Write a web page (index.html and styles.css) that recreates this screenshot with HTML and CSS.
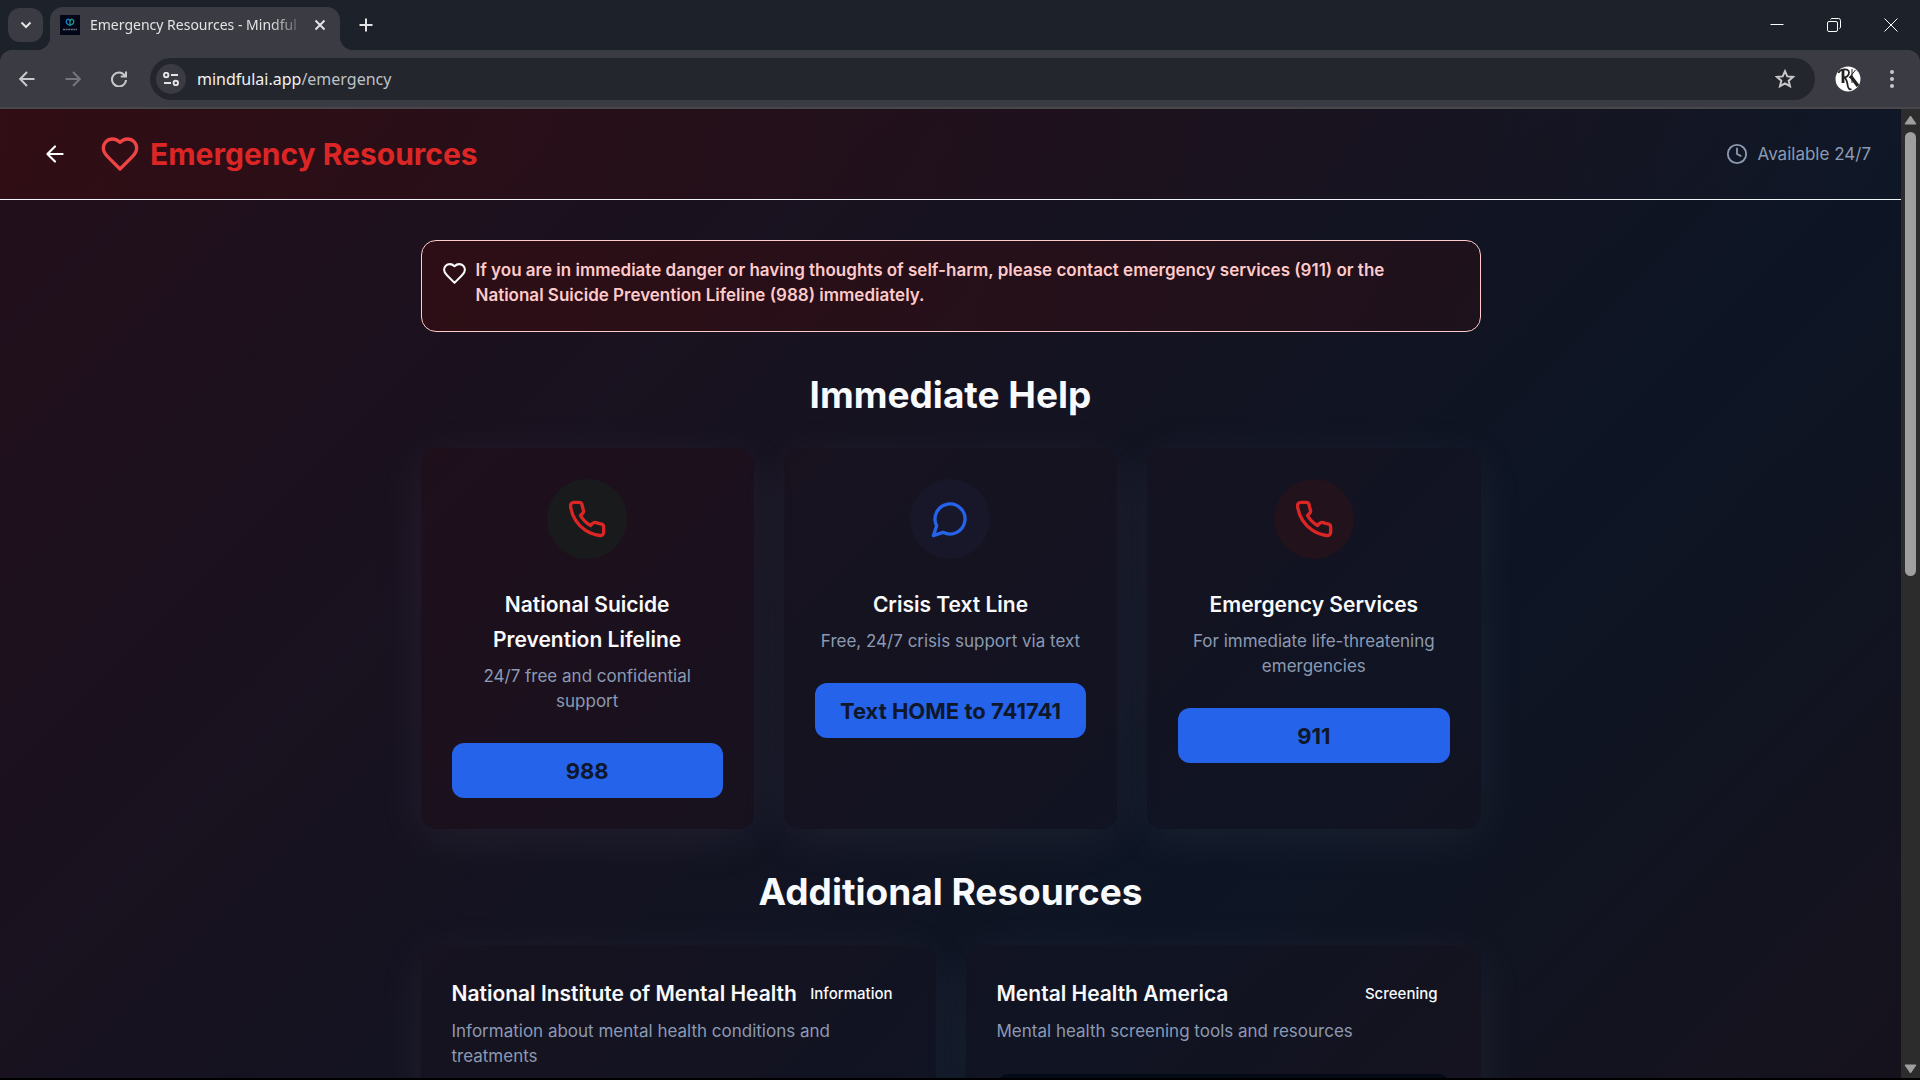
FILE: index.html
```html
<!DOCTYPE html>
<html lang="en">
<head>
<meta charset="utf-8">
<meta name="viewport" content="width=device-width, initial-scale=1">
<title>Emergency Resources - MindfulAI</title>
<link rel="stylesheet" href="styles.css">
</head>
<body>
<svg class="defs" aria-hidden="true">
  <symbol id="i-heart" viewBox="0 0 24 24"><path d="M19 14c1.49-1.46 3-3.21 3-5.5A5.5 5.5 0 0 0 16.5 3c-1.76 0-3 .5-4.500 2-1.500-1.500-2.740-2-4.500-2A5.500 5.500 0 0 0 2 8.500c0 2.300 1.500 4.050 3 5.500l7 7Z"/></symbol>
  <symbol id="i-phone" viewBox="0 0 24 24"><path d="M22 16.920v3a2 2 0 0 1-2.180 2 19.790 19.790 0 0 1-8.630-3.070 19.500 19.500 0 0 1-6-6 19.790 19.790 0 0 1-3.070-8.670A2 2 0 0 1 4.110 2h3a2 2 0 0 1 2 1.720 12.840 12.840 0 0 0 .7 2.810 2 2 0 0 1-.45 2.110L8.090 9.910a16 16 0 0 0 6 6l1.270-1.270a2 2 0 0 1 2.110-.45 12.840 12.840 0 0 0 2.810.7A2 2 0 0 1 22 16.920z"/></symbol>
  <symbol id="i-chat" viewBox="0 0 24 24"><path d="M7.900 20A9 9 0 1 0 4 16.100L2 22Z"/></symbol>
  <symbol id="i-clock" viewBox="0 0 24 24"><circle cx="12" cy="12" r="10"/><path d="M12 6v6l4 2"/></symbol>
  <symbol id="i-arrow" viewBox="0 0 24 24"><path d="m12 19-7-7 7-7M19 12H5"/></symbol>
</svg>

<div class="tabstrip">
  <button class="tab-search" aria-label="Search tabs"><svg width="12" height="12" viewBox="0 0 12 12"><path d="M1.500 3.500 6 8l4.500-4.500"/></svg></button>
  <div class="tab">
    <svg class="favicon" width="20" height="20" viewBox="0 0 20 20"><rect class="favicon-bg" width="20" height="20"/><path d="M10 10.500C7 9.500 5.500 7.500 6.500 5.500S9.500 4 10 6" fill="none" stroke="#1786c4" stroke-width="1.300"/><path d="M10 10.500c3-1 4.500-3 3.500-5S10.500 4 10 6v4" fill="none" stroke="#159a8c" stroke-width="1.300"/><path d="M3 14.500h14" stroke="#6b7280" stroke-width="1.500" stroke-dasharray="2 .6"/></svg>
    <span class="tab-title">Emergency Resources - Mindful</span>
    <button class="plain" aria-label="Close tab"><svg width="12" height="12" viewBox="0 0 12 12"><path d="m1.500 1.500 9 9m0-9-9 9"/></svg></button>
  </div>
  <button class="plain new-tab" aria-label="New tab"><svg width="14" height="14" viewBox="0 0 14 14"><path d="M7 .5v13M.5 7h13"/></svg></button>
  <div class="window-buttons">
    <button class="plain" aria-label="Minimize"><svg width="14" height="14" viewBox="0 0 14 14"><path d="M.5 6.500h13"/></svg></button>
    <button class="plain" aria-label="Restore"><svg width="14" height="14" viewBox="0 0 14 14"><rect x=".5" y="3.500" width="10" height="10" rx="1.500"/><path d="M3.500 1.500q.5-1 1.500-1h6.500a2 2 0 0 1 2 2V9q0 1-1 1.500"/></svg></button>
    <button class="plain" aria-label="Close"><svg width="14" height="14" viewBox="0 0 14 14"><path d="m.5.5 13 13m0-13-13 13"/></svg></button>
  </div>
</div>

<div class="toolbar-wrap">
<div class="toolbar">
  <button class="plain nav" aria-label="Back"><svg width="16" height="16" viewBox="0 0 16 16"><path d="M15.500 8H1.500M8 1 1.200 8 8 15"/></svg></button>
  <button class="plain nav off" aria-label="Forward" disabled><svg width="16" height="16" viewBox="0 0 16 16"><path d="M.5 8h14M8 1l6.800 7L8 15"/></svg></button>
  <button class="plain nav" aria-label="Reload"><svg width="16" height="16" viewBox="0 0 16 16"><path d="M13.800 4.500A7 7 0 1 0 15 9M15 .5V5.500H9.800"/></svg></button>
  <div class="omnibox">
    <button class="site-info" aria-label="Site information"><svg width="16" height="14" viewBox="0 0 16 14"><circle cx="3.200" cy="3" r="2.200"/><path d="M8 3h7M1 11h7"/><circle cx="12.800" cy="11" r="2.200"/></svg></button>
    <div class="url">mindfulai.app<span>/emergency</span></div>
    <button class="plain star" aria-label="Bookmark this page"><svg width="20" height="20" viewBox="0 0 20 20"><path d="m10 2.200 2.300 5.200 5.700.5-4.300 3.800 1.300 5.500L10 14.300l-5 2.900 1.300-5.500L2 7.900l5.700-.5Z"/></svg></button>
  </div>
  <svg class="avatar" width="26" height="26" viewBox="0 0 26 26"><circle cx="13" cy="13" r="12.500" fill="#fff"/><g fill="none" stroke="#222"><path d="M8 3v14" stroke-width="2.800"/><path d="M3.500 7C5 3 14 1.500 14 6.500 14 10 11 11.500 9 11.500c2 1 3 3 3.500 7s2 5.500 4 4.500" stroke-width="1.800"/><path d="M17 3v14" stroke-width="1"/><path d="M20.500 4 14 12" stroke-width="1"/><path d="m15.500 10 7.500 10" stroke-width="3.400"/></g></svg>
  <button class="plain menu" aria-label="Menu"><svg width="4" height="18" viewBox="0 0 4 18"><circle cx="2" cy="2" r="2"/><circle cx="2" cy="9" r="2"/><circle cx="2" cy="16" r="2"/></svg></button>
</div>
</div>

<div class="viewport">
  <div class="page">
    <header class="page-header">
      <a class="back" href="#back" aria-label="Back"><svg class="icon" width="26" height="26"><use href="#i-arrow"/></svg></a>
      <svg class="icon heart" width="40" height="40"><use href="#i-heart"/></svg>
      <h1>Emergency Resources</h1>
      <p class="hours"><svg class="icon" width="22" height="22"><use href="#i-clock"/></svg>Available 24/7</p>
    </header>

    <main class="content">
      <div class="alert" role="alert">
        <svg class="icon" width="25" height="25"><use href="#i-heart"/></svg>
        <p>If you are in immediate danger or having thoughts of self-harm, please contact emergency services (911) or the National Suicide Prevention Lifeline (988) immediately.</p>
      </div>

      <section>
        <h2>Immediate Help</h2>
        <div class="grid three">
          <article class="card help tint-red">
            <div class="disc green"><svg class="icon" width="40" height="40"><use href="#i-phone"/></svg></div>
            <h3>National Suicide Prevention Lifeline</h3>
            <p>24/7 free and confidential support</p>
            <button class="call">988</button>
          </article>
          <article class="card help">
            <div class="disc blue"><svg class="icon" width="40" height="40"><use href="#i-chat"/></svg></div>
            <h3>Crisis Text Line</h3>
            <p>Free, 24/7 crisis support via text</p>
            <button class="call">Text HOME to 741741</button>
          </article>
          <article class="card help">
            <div class="disc red"><svg class="icon" width="40" height="40"><use href="#i-phone"/></svg></div>
            <h3>Emergency Services</h3>
            <p>For immediate life-threatening emergencies</p>
            <button class="call">911</button>
          </article>
        </div>
      </section>

      <section>
        <h2>Additional Resources</h2>
        <div class="grid two">
          <article class="card resource">
            <div class="card-head"><h3>National Institute of Mental Health</h3><span class="badge">Information</span></div>
            <p>Information about mental health conditions and treatments</p>
            <a class="visit" href="#nimh" aria-label="Visit website"></a>
          </article>
          <article class="card resource">
            <div class="card-head"><h3>Mental Health America</h3><span class="badge">Screening</span></div>
            <p>Mental health screening tools and resources</p>
            <a class="visit" href="#mha" aria-label="Visit website"></a>
          </article>
        </div>
      </section>
    </main>
  </div>
  <div class="scrollbar" aria-hidden="true">
    <svg width="13" height="10" viewBox="0 0 13 10"><path d="M6.500 1 12 9H1Z"/></svg>
    <div class="track"><div class="thumb"></div></div>
    <svg width="13" height="10" viewBox="0 0 13 10"><path d="M6.500 9 12 1H1Z"/></svg>
  </div>
</div>
</body>
</html>
```
FILE: styles.css
```css
* { box-sizing: border-box; margin: 0; }

body {
  display: flex;
  flex-direction: column;
  height: 100vh;
  padding-bottom: 2px;
  overflow: hidden;
  background: #000;
  font-family: Inter, "Liberation Sans", sans-serif;
  color: #f8fafc;
}

button { border: 0; padding: 0; font: inherit; color: inherit; }
svg { display: block; flex: none; }
.defs { display: none; }
.icon { fill: none; stroke: currentColor; stroke-width: 2; stroke-linecap: round; stroke-linejoin: round; }

/* Browser frame */
.tabstrip {
  display: flex;
  align-items: center;
  flex: none;
  height: 50px;
  padding-left: 8px;
  background: #1d2129;
  color: #e3e3e3;
  font-family: "Noto Sans", "Open Sans", sans-serif;
}
.tabstrip svg, .nav svg, .site-info svg, .star svg { fill: none; stroke: currentColor; stroke-width: 2; }
.tabstrip .favicon-bg { fill: #020617; stroke: none; }
.plain { display: flex; align-items: center; justify-content: center; background: none; }
.tab-search {
  display: flex;
  align-items: center;
  justify-content: center;
  width: 35px;
  height: 34px;
  border-radius: 12px;
  background: #3a3b43;
}
.tab {
  position: relative;
  display: flex;
  align-items: center;
  align-self: flex-end;
  width: 290px;
  height: 43px;
  margin-left: 7px;
  padding: 0 14px 7px 10px;
  border-radius: 13px 13px 0 0;
  background: #3a3b43;
}
.tab::before, .tab::after {
  content: "";
  position: absolute;
  bottom: 0;
  width: 13px;
  height: 13px;
}
.tab::before { right: 100%; background: radial-gradient(circle at 0 0, transparent 13px, #3a3b43 13px); }
.tab::after { left: 100%; background: radial-gradient(circle at 100% 0, transparent 13px, #3a3b43 13px); }
.tab-title {
  flex: 1;
  margin-left: 10px;
  white-space: nowrap;
  font-size: 14px;
  line-height: 20px;
  mask-image: linear-gradient(90deg, #000 180px, transparent 216px);
}
.new-tab { width: 36px; height: 36px; margin-left: 8px; }
.window-buttons { display: flex; margin-left: auto; padding-right: 1px; color: #fff; }
.window-buttons .plain { width: 57px; height: 46px; }
.window-buttons svg { stroke-width: 1; }

.toolbar-wrap { flex: none; background: #1d2129; }
.toolbar {
  display: flex;
  align-items: center;
  height: 59px;
  padding: 0 10px 0 4px;
  border-bottom: 2px solid #48484a;
  border-radius: 12px 12px 0 0;
  background: #3a3b43;
  color: #c7c8cc;
}
.nav { width: 46px; height: 36px; }
.nav.off { color: #75767c; }
.omnibox {
  display: flex;
  align-items: center;
  flex: 1;
  height: 42px;
  margin-left: 8px;
  padding: 0 20px 0 6px;
  border-radius: 21px;
  background: #24262d;
}
.site-info {
  display: flex;
  align-items: center;
  justify-content: center;
  width: 30px;
  height: 30px;
  border-radius: 50%;
  background: #3a3b43;
  color: #e3e3e3;
}
.url {
  flex: 1;
  margin-left: 11px;
  font-family: "Noto Sans", "Open Sans", sans-serif;
  font-size: 16px;
  line-height: 24px;
  color: #f1f1f1;
}
.url span { color: #bdc1c6; }
.avatar { margin: 0 13px 0 20px; }
.menu { width: 36px; height: 36px; }
.menu svg { fill: currentColor; }

/* Page */
.viewport { display: flex; flex: 1; min-height: 0; }
.page {
  flex: 1;
  min-width: 0;
  overflow: hidden;
  background: linear-gradient(135deg, #230f1b 0, #0d1524 1394px, #210f14 2788px);
}
.page-header {
  display: flex;
  align-items: center;
  height: 91px;
  padding: 0 30px 0 42px;
  border-bottom: 1px solid #f1f5f9;
  background: linear-gradient(90deg, rgba(69, 10, 10, .4), rgba(69, 10, 10, .12) 60%, rgba(30, 41, 59, .12));
}
.back { color: #fff; }
.heart { margin: 0 10px 0 32px; color: #ef4444; }
h1 { font-size: 30px; line-height: 40px; font-weight: 700; color: #dc2626; }
.hours {
  display: flex;
  align-items: center;
  gap: 10px;
  margin-left: auto;
  font-size: 17px;
  line-height: 25px;
  color: #8b9ab2;
}
.content {
  display: flex;
  flex-direction: column;
  gap: 40px;
  max-width: 1120px;
  margin: 0 auto;
  padding: 40px 30px;
}
.alert {
  display: flex;
  gap: 9px;
  padding: 17px 48px 23px 20px;
  border: 1px solid #fecaca;
  border-radius: 15px;
  background: linear-gradient(90deg, rgba(69, 10, 10, .42), rgba(69, 10, 10, .25));
}
.alert .icon { margin-top: 3px; }
.alert p { font-size: 17px; line-height: 25px; font-weight: 600; color: #fecaca; }

h2 { margin-bottom: 31px; font-size: 37px; line-height: 45px; font-weight: 700; text-align: center; }
.grid { display: grid; gap: 30px; }
.three { grid-template-columns: repeat(3, 1fr); }
.two { grid-template-columns: repeat(2, 1fr); }
.card {
  padding: 30px;
  border: 1px solid transparent;
  border-radius: 15px;
  background: rgba(69, 10, 10, .05);
  box-shadow: 0 10px 50px rgba(200, 200, 220, .07);
}
.tint-red { background: rgba(69, 10, 10, .12); }
.card h3 { font-size: 21px; line-height: 35px; font-weight: 600; }
.card p { margin-top: 7px; font-size: 17px; line-height: 25px; color: #8b9ab2; }
.resource p { margin-top: 8px; }
.help { text-align: center; }
.disc {
  display: flex;
  align-items: center;
  justify-content: center;
  width: 80px;
  height: 80px;
  margin: 0 auto 28px;
  border-radius: 50%;
}
.green { background: #191a1b; color: #dc2626; }
.blue { background: #18172a; color: #2563eb; }
.red { background: #21121c; color: #dc2626; }
.call {
  width: 100%;
  height: 55px;
  margin-top: 29px;
  border-radius: 12px;
  background: #2563eb;
  color: #0f172a;
  font-size: 22px;
  font-weight: 700;
}
.card-head { display: flex; align-items: center; justify-content: space-between; }
.badge { padding: 0 12px 0 10px; font-size: 15px; line-height: 20px; font-weight: 500; }
.visit { display: block; height: 50px; margin-top: 30px; border-radius: 12px; background: #040a16; }

.scrollbar {
  display: flex;
  flex-direction: column;
  align-items: center;
  width: 19px;
  padding: 6px 0 4px;
  background: #2c2c2c;
}
.scrollbar svg { fill: #9f9f9f; stroke: #9f9f9f; stroke-linejoin: round; }
.track { flex: 1; padding: 7px 0; }
.thumb { width: 11px; height: 48%; border-radius: 6px; background: #9f9f9f; }
```
